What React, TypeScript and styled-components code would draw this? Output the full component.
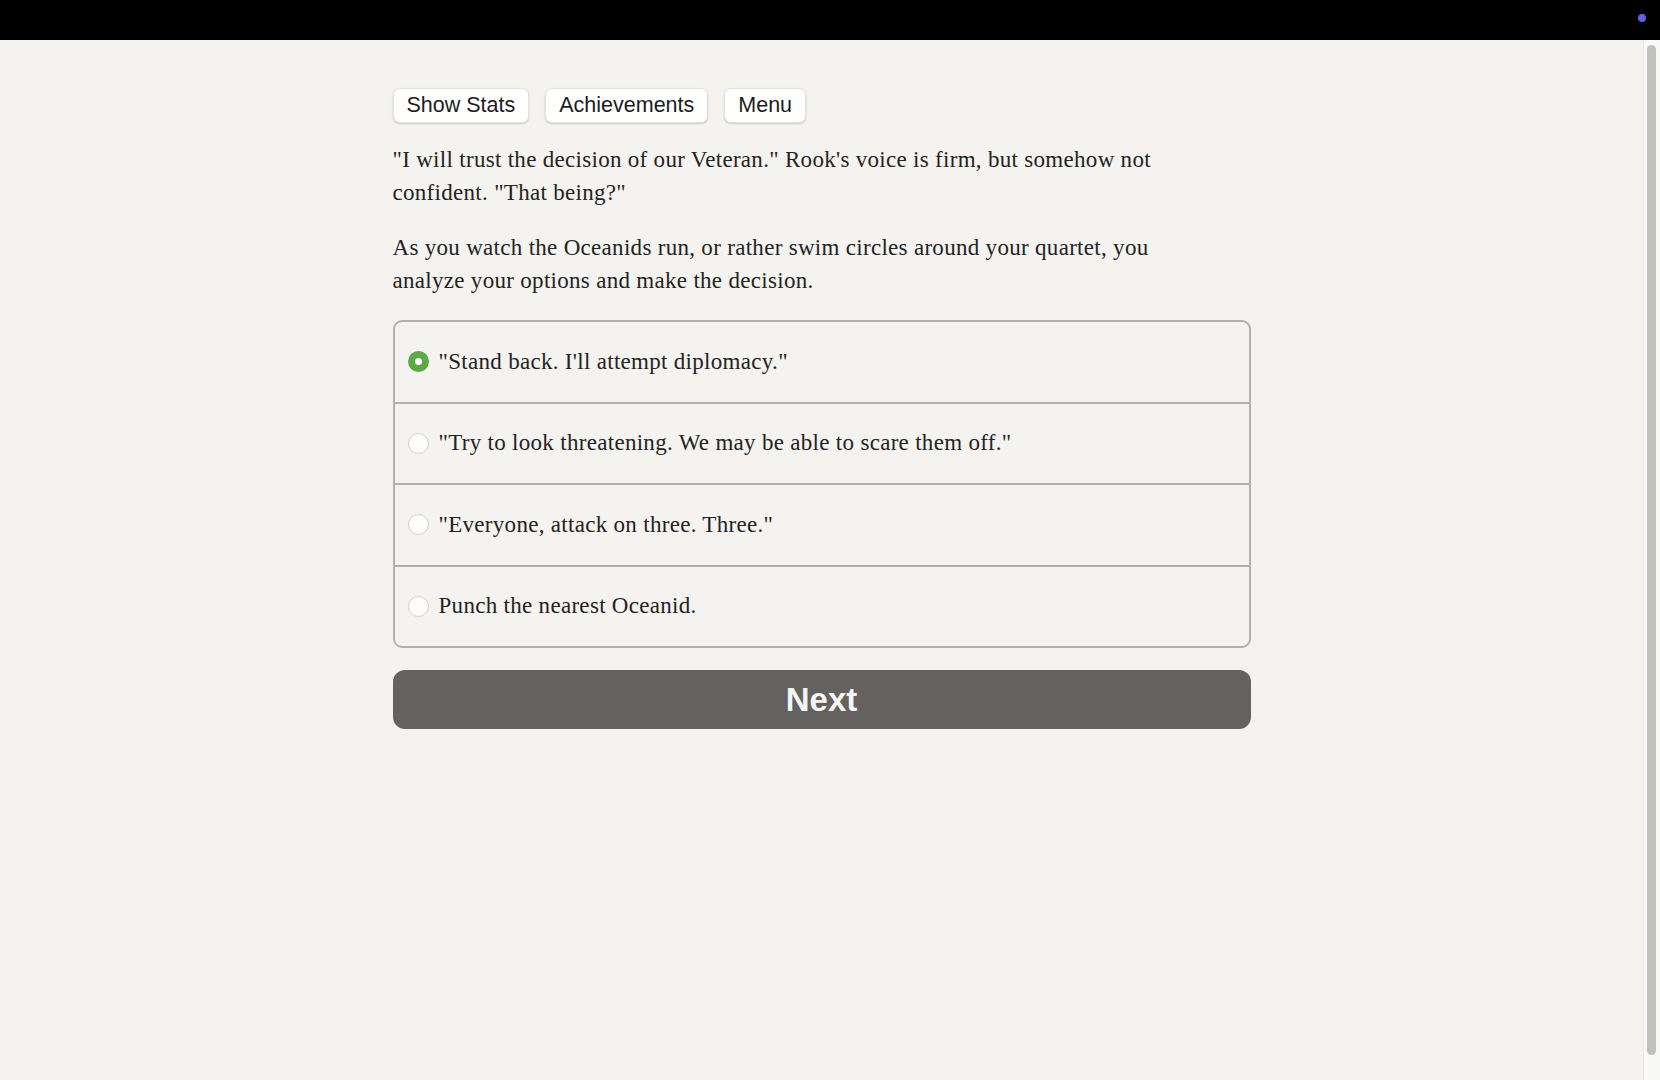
import React, { useState } from "react";
import styled, { createGlobalStyle } from "styled-components";

const GlobalStyle = createGlobalStyle`
  html, body {
    margin: 0;
    height: 100%;
    overflow: hidden;
    background: #f4f3ef;
  }
  #root {
    height: 100%;
  }
`;

const choices = [
  `"Stand back. I'll attempt diplomacy."`,
  `"Try to look threatening. We may be able to scare them off."`,
  `"Everyone, attack on three. Three."`,
  "Punch the nearest Oceanid.",
];

const Screen = styled.div`
  height: 100%;
  display: flex;
  flex-direction: column;
`;

const TopBar = styled.div`
  position: relative;
  height: 40px;
  flex: none;
  background: #000;
`;

const StatusDot = styled.span`
  position: absolute;
  top: 14px;
  right: 14px;
  width: 8px;
  height: 8px;
  border-radius: 50%;
  background: #6360ee;
`;

const Body = styled.div`
  flex: 1;
  display: flex;
  min-height: 0;
`;

const Scroller = styled.div`
  flex: 1;
  overflow: hidden;
  background: #f4f3ef;
`;

const ScrollTrack = styled.div`
  flex: none;
  box-sizing: border-box;
  width: 17px;
  display: flex;
  padding: 5px 4px 25px 3px;
  background: #f9f9f8;
  border-left: 1px solid #e7e6e3;
`;

const ScrollThumb = styled.div`
  flex: 1;
  border-radius: 5px;
  background: #c1c1c1;
`;

const Column = styled.main`
  max-width: 858px;
  margin: 0 auto;
  padding: 48px 0 0;
`;

const Toolbar = styled.nav`
  display: flex;
  gap: 16px;
`;

const ToolButton = styled.button`
  height: 35px;
  padding: 0 13px;
  border: 1px solid #e2e1de;
  border-radius: 7px;
  background: #fff;
  box-shadow: 0 1px 2px rgba(0, 0, 0, 0.18);
  font-family: "Liberation Sans", Arial, sans-serif;
  font-size: 21.5px;
  color: #1c1c1c;
  cursor: pointer;
`;

const Story = styled.p`
  max-width: 830px;
  margin: 20px 0 0;
  font-family: "Liberation Serif", "Times New Roman", serif;
  font-size: 23px;
  letter-spacing: 0.3px;
  line-height: 33px;
  color: #232323;

  & + & {
    margin-top: 22px;
  }
`;

const ChoiceList = styled.div`
  margin-top: 23px;
  border: 2px solid #b0b0b0;
  border-radius: 9px;
  overflow: hidden;
`;

const ChoiceRow = styled.label`
  display: flex;
  align-items: center;
  gap: 10px;
  height: 79.5px;
  padding-left: 13px;
  cursor: pointer;

  & + & {
    border-top: 2px solid #b0b0b0;
  }
`;

const Radio = styled.span<{ $on: boolean }>`
  flex: none;
  width: 21px;
  height: 21px;
  border-radius: 50%;
  box-sizing: border-box;
  background: ${(p) => (p.$on ? "#fff" : "#fdfdfc")};
  border: ${(p) => (p.$on ? "7.5px solid #5bab43" : "1.5px solid #cfcfcf")};
`;

const ChoiceText = styled.span`
  font-family: "Liberation Serif", "Times New Roman", serif;
  font-size: 23px;
  letter-spacing: 0.3px;
  color: #232323;
`;

const NextButton = styled.button`
  display: block;
  width: 100%;
  height: 59px;
  margin-top: 22px;
  border: none;
  border-radius: 12px;
  background: #636260;
  color: #f6f5f2;
  font-family: "Liberation Sans", Arial, sans-serif;
  font-weight: bold;
  font-size: 33px;
  cursor: pointer;
`;

export default function App() {
  const [picked, setPicked] = useState(0);

  return (
    <Screen>
      <GlobalStyle />
      <TopBar>
        <StatusDot />
      </TopBar>
      <Body>
        <Scroller>
          <Column>
            <Toolbar>
              <ToolButton>Show Stats</ToolButton>
              <ToolButton>Achievements</ToolButton>
              <ToolButton>Menu</ToolButton>
            </Toolbar>
            <Story>
              "I will trust the decision of our Veteran." Rook's voice is firm,
              but somehow not confident. "That being?"
            </Story>
            <Story>
              As you watch the Oceanids run, or rather swim circles around your
              quartet, you analyze your options and make the decision.
            </Story>
            <ChoiceList>
              {choices.map((c, i) => (
                <ChoiceRow key={c} onClick={() => setPicked(i)}>
                  <Radio $on={picked === i} />
                  <ChoiceText>{c}</ChoiceText>
                </ChoiceRow>
              ))}
            </ChoiceList>
            <NextButton>Next</NextButton>
          </Column>
        </Scroller>
        <ScrollTrack>
          <ScrollThumb />
        </ScrollTrack>
      </Body>
    </Screen>
  );
}
